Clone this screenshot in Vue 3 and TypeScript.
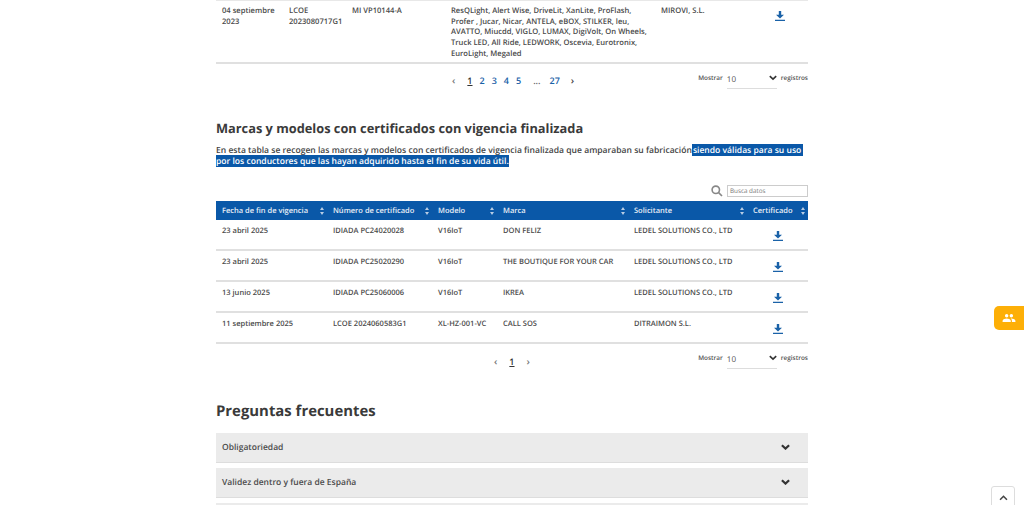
<script setup lang="ts">
interface Row { date: string; cert: string; model: string; brand: string; applicant: string }
const headers: string[] = ['Fecha de fin de vigencia', 'Número de certificado', 'Modelo', 'Marca', 'Solicitante', 'Certificado']
const rows: Row[] = [
  { date: '23 abril 2025', cert: 'IDIADA PC24020028', model: 'V16IoT', brand: 'DON FELIZ', applicant: 'LEDEL SOLUTIONS CO., LTD' },
  { date: '23 abril 2025', cert: 'IDIADA PC25020290', model: 'V16IoT', brand: 'THE BOUTIQUE FOR YOUR CAR', applicant: 'LEDEL SOLUTIONS CO., LTD' },
  { date: '13 junio 2025', cert: 'IDIADA PC25060006', model: 'V16IoT', brand: 'IKREA', applicant: 'LEDEL SOLUTIONS CO., LTD' },
  { date: '11 septiembre 2025', cert: 'LCOE 2024060583G1', model: 'XL-HZ-001-VC', brand: 'CALL SOS', applicant: 'DITRAIMON S.L.' },
]
const faqs: string[] = ['Obligatoriedad', 'Validez dentro y fuera de España']
</script>

<template>
  <div class="page">
    <main class="content">
      <div class="row-a">
        <div>04 septiembre 2023</div>
        <div>LCOE 2023080717G1</div>
        <div>MI VP10144-A</div>
        <div>ResQLight, Alert Wise, DriveLit, XanLite, ProFlash, Profer , Jucar, Nicar, ANTELA, eBOX, STILKER, leu, AVATTO, Miucdd, VIGLO, LUMAX, DigiVolt, On Wheels, Truck LED, All Ride, LEDWORK, Oscevia, Eurotronix, EuroLight, Megaled</div>
        <div>MIROVI, S.L.</div>
        <div class="dl-a">
          <svg class="dl" viewBox="0 0 10 10"><path d="M3.8 0h2.400v3.800H9L5 7.400 1 3.800h2.800zM0 8.800h10V10H0z" /></svg>
        </div>
      </div>

      <div class="pager-row pager-first">
        <nav class="pages pages-a">
          <span class="arrow">‹</span>
          <span class="cur">1</span><a>2</a><a>3</a><a>4</a><a>5</a>
          <span class="dots">...</span><a>27</a>
          <span class="arrow dark">›</span>
        </nav>
        <div class="show">
          <span>Mostrar</span>
          <div class="sel">10<svg viewBox="0 0 10 7"><path d="M1 1.2l4 3.8 4-3.8" /></svg></div>
          <span>registros</span>
        </div>
      </div>

      <h2 class="h-marcas">Marcas y modelos con certificados con vigencia finalizada</h2>
      <p class="intro">En esta tabla se recogen las marcas y modelos con certificados de vigencia finalizada que amparaban su fabricación<span class="hl hl-first">siendo válidas para su uso</span> <span class="hl">por los conductores que las hayan adquirido hasta el fin de su vida útil.</span></p>

      <div class="search">
        <svg viewBox="0 0 12 12"><circle cx="4.8" cy="4.8" r="3.7" /><path d="M7.6 7.6L11 11" /></svg>
        <div class="input">Busca datos</div>
      </div>

      <div class="thead grid-b">
        <div v-for="h in headers" :key="h" class="th">
          <span>{{ h }}</span>
          <svg class="sort" viewBox="0 0 4 8"><path d="M2 0l2 3H0zM2 8L0 5h4z" /></svg>
        </div>
      </div>
      <div v-for="r in rows" :key="r.cert" class="row-b grid-b">
        <div>{{ r.date }}</div>
        <div>{{ r.cert }}</div>
        <div>{{ r.model }}</div>
        <div>{{ r.brand }}</div>
        <div>{{ r.applicant }}</div>
        <div class="dl-b">
          <svg class="dl" viewBox="0 0 10 10"><path d="M3.8 0h2.400v3.800H9L5 7.400 1 3.800h2.800zM0 8.800h10V10H0z" /></svg>
        </div>
      </div>

      <div class="pager-row pager-second">
        <nav class="pages pages-b">
          <span class="arrow">‹</span>
          <span class="cur">1</span>
          <span class="arrow">›</span>
        </nav>
        <div class="show">
          <span>Mostrar</span>
          <div class="sel">10<svg viewBox="0 0 10 7"><path d="M1 1.2l4 3.8 4-3.8" /></svg></div>
          <span>registros</span>
        </div>
      </div>

      <h2 class="h-faq">Preguntas frecuentes</h2>
      <div v-for="f in faqs" :key="f" class="faq">
        <span>{{ f }}</span>
        <svg viewBox="0 0 10 7"><path d="M1 1.2l4 3.8 4-3.8" /></svg>
      </div>
      <div class="faq"></div>
    </main>

    <button class="help" aria-label="Ayuda">
      <svg viewBox="0 0 24 24"><path d="M16 11a3 3 0 1 0 0-6 3 3 0 0 0 0 6zm-8 0a3 3 0 1 0 0-6 3 3 0 0 0 0 6zm0 2c-2.3 0-7 1.2-7 3.500V19h14v-2.500C15 14.200 10.300 13 8 13zm8 0h-1c1.200.9 2 2 2 3.500V19h6v-2.500c0-2.300-4.700-3.500-7-3.500z" /></svg>
    </button>
    <button class="top" aria-label="Subir">
      <svg viewBox="0 0 10 7"><path d="M1 5.500l4-4 4 4" /></svg>
    </button>
  </div>
</template>

<style>
html, body { margin: 0; background: #fff; }
</style>

<style scoped>
.page {
  position: relative;
  width: 1024px;
  height: 505px;
  overflow: hidden;
  font-family: "Open Sans", "Noto Sans", sans-serif;
  font-size: 7.600px;
  font-weight: 600;
  color: #4a4a4a;
  text-rendering: geometricPrecision;
}
.content {
  width: 592px;
  margin-left: 216px;
}
.row-a {
  display: grid;
  grid-template-columns: 67px 63px 99px 210px 95px 58px;
  height: 64px;
  box-sizing: border-box;
  border-top: 1px solid #e8e8e8;
  border-bottom: 2px solid #e0e0e0;
  line-height: 10.700px;
}
.row-a > div {
  padding: 5px 6px 0;
}
.row-a > .dl-a {
  padding: 10px 0 0 25px;
}
.dl {
  display: block;
  width: 10px;
  height: 10px;
  fill: #1a62a8;
}
.pager-row {
  display: flex;
  align-items: flex-start;
  justify-content: space-between;
  position: relative;
}
.pager-first {
  height: 55px;
  padding-top: 9px;
  box-sizing: border-box;
}
.pager-second {
  height: 57px;
  padding-top: 9px;
  box-sizing: border-box;
}
.pages {
  display: flex;
  align-items: center;
  font-size: 9px;
  line-height: 14px;
  color: #1a62a8;
}
.pages-a { margin: 1px 0 0 236px; }
.pages-b { margin: 2px 0 0 278px; }
.pages a { margin-right: 7px; }
.arrow {
  color: #777;
  font-size: 10px;
  line-height: 12px;
  margin-right: 12px;
  position: relative;
  top: -1px;
}
.arrow.dark { color: #444; margin-left: 4px; }
.pages-b .arrow:last-child { margin-left: 5px; }
.cur {
  color: #333;
  text-decoration: underline;
  margin-right: 7px;
}
.dots { color: #666; margin: 0 9px 0 5px; }
.show {
  display: flex;
  align-items: flex-start;
  gap: 4px;
  font-size: 6.400px;
  line-height: 10px;
  color: #555;
}
.sel {
  position: relative;
  width: 50px;
  height: 16px;
  box-sizing: border-box;
  border-bottom: 1px solid #ddd;
  font-size: 8px;
  font-weight: 400;
  line-height: 13px;
  color: #555;
}
.sel svg {
  position: absolute;
  right: 0;
  top: 2px;
  width: 8px;
  height: 6px;
  fill: none;
  stroke: #333;
  stroke-width: 2;
}
.h-marcas, .h-faq {
  margin: 0;
  font-weight: 700;
  color: #3a3a3a;
}
.h-marcas {
  font-size: 12.800px;
  line-height: 18px;
}
.intro {
  margin: 7.500px 0 0;
  font-size: 8.550px;
  line-height: 11.500px;
  color: #444;
}
.hl {
  background: #0a58a8;
  color: #fff;
}
.hl-first {
  padding: 0 2px 0 1px;
}
.search {
  display: flex;
  justify-content: flex-end;
  align-items: center;
  gap: 4px;
  margin-top: 16.500px;
  height: 13px;
}
.search svg {
  width: 12px;
  height: 12px;
  fill: none;
  stroke: #888;
  stroke-width: 1.600;
}
.input {
  width: 81px;
  height: 12px;
  box-sizing: border-box;
  border: 1px solid #ccc;
  font-size: 6.300px;
  font-weight: 400;
  line-height: 10px;
  padding-left: 2px;
  color: #777;
}
.grid-b {
  display: grid;
  grid-template-columns: 111px 105px 65px 131px 119px 61px;
}
.thead {
  margin-top: 4px;
  height: 19px;
  background: #0a58a8;
  color: #e8eef6;
  font-size: 7.500px;
  line-height: 18px;
}
.th {
  display: flex;
  justify-content: space-between;
  align-items: center;
  padding: 1px 3px 0 6px;
}
.sort {
  width: 4px;
  height: 8px;
  fill: #b8cde4;
}
.row-b {
  height: 31px;
  box-sizing: border-box;
  border-bottom: 2px solid #e0e0e0;
  line-height: 11px;
  font-size: 7.500px;
}
.row-b > div { padding: 6px 6px 0; }
.row-b > .dl-b { padding: 11px 0 0 26px; }
.h-faq {
  font-size: 14.900px;
  line-height: 20px;
  margin-bottom: 11.500px;
}
.faq {
  display: flex;
  align-items: center;
  justify-content: space-between;
  height: 30px;
  box-sizing: border-box;
  margin-bottom: 5px;
  padding: 0 18px 0 6px;
  background: #ebebeb;
  border-bottom: 1px solid #ddd;
  font-size: 8.500px;
}
.faq svg {
  width: 9px;
  height: 6.500px;
  fill: none;
  stroke: #333;
  stroke-width: 2.400;
}
.help {
  position: absolute;
  left: 994px;
  top: 306px;
  width: 34px;
  height: 24px;
  padding: 0 0 0 3px;
  border: 0;
  border-radius: 5px 0 0 5px;
  background: #fdaf07;
  display: flex;
  align-items: center;
}
.help svg {
  width: 14px;
  height: 14px;
  fill: #fff;
  margin-left: 5px;
}
.top {
  position: absolute;
  left: 991px;
  top: 486px;
  width: 24px;
  height: 30px;
  padding: 0;
  border: 1px solid #ddd;
  border-radius: 3px;
  background: #fff;
  display: flex;
  justify-content: center;
  padding-top: 8px;
}
.top svg {
  width: 9px;
  height: 6px;
  fill: none;
  stroke: #444;
  stroke-width: 1.800;
}
</style>
